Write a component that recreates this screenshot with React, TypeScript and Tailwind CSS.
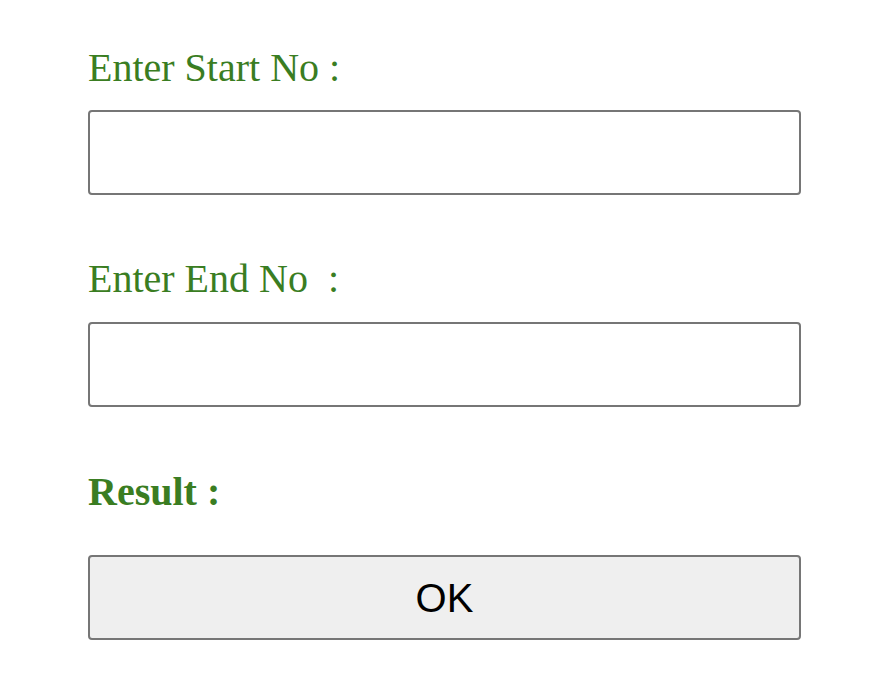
import React from 'react';

export default function App() {
  return (
    <div className="min-h-[698px] w-full bg-white">
      <div className="ml-[88px] w-[713px] pt-[46px] flex flex-col">
        <label className="text-[40px] leading-[44px] text-[#3a7d22] font-['Liberation_Serif',serif]">
          Enter Start No :
        </label>
        <input
          type="text"
          className="mt-[20px] h-[85px] w-full rounded-[4px] border-2 border-[#767676] bg-white px-2 text-[40px] outline-none"
        />
        <label className="mt-[62px] text-[40px] leading-[44px] text-[#3a7d22] font-['Liberation_Serif',serif] whitespace-pre">
          Enter End No  :
        </label>
        <input
          type="text"
          className="mt-[21px] h-[85px] w-full rounded-[4px] border-2 border-[#767676] bg-white px-2 text-[40px] outline-none"
        />
        <div className="mt-[63px] text-[40px] leading-[44px] font-bold text-[#3a7d22] font-['Liberation_Serif',serif]">
          Result :
        </div>
        <button className="mt-[41px] h-[85px] w-full rounded-[4px] border-2 border-[#767676] bg-[#efefef] text-[40px] text-black font-['Liberation_Sans',Arial,sans-serif]">
          OK
        </button>
      </div>
    </div>
  );
}
